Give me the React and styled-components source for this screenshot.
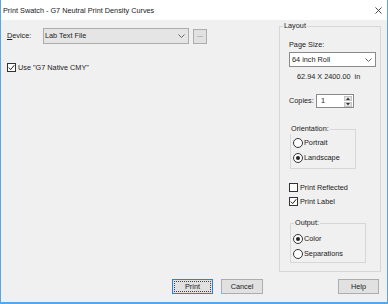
import React from 'react';
import styled, { createGlobalStyle } from 'styled-components';

const GlobalStyle = createGlobalStyle`
  html, body {
    margin: 0;
    padding: 0;
    background: #f0f0f0;
  }
  body {
    font-family: "Liberation Sans", Arial, sans-serif;
    font-size: 7.3px;
    color: #1b1b1b;
  }
  * { box-sizing: border-box; }
`;

const Window = styled.div`
  width: 388px;
  height: 304px;
  border: 1px solid #5aa5e6;
  border-top: none;
  border-bottom-width: 2px;
  display: flex;
  flex-direction: column;
  background: #f0f0f0;
`;

const TitleBar = styled.div`
  height: 20px;
  background: #fff;
  display: flex;
  align-items: center;
  justify-content: space-between;
  padding: 0 5px 0 2px;
  flex: none;
`;

const Body = styled.div`
  flex: 1;
  display: flex;
  flex-direction: column;
  padding: 1px 6px 0 6px;
`;

const Main = styled.div`
  display: flex;
  align-items: flex-start;
`;

const LeftColumn = styled.div`
  flex: 1;
  padding-top: 7px;
`;

const Row = styled.div`
  display: flex;
  align-items: center;
  height: ${p => p.$h || 12}px;
  margin-top: ${p => p.$mt || 0}px;
  line-height: ${p => p.$h || 12}px;
  white-space: nowrap;
`;

const FieldLabel = styled.span`
  width: ${p => p.$w}px;
  flex: none;
`;

const Combo = styled.div`
  width: ${p => p.$w}px;
  height: ${p => p.$h}px;
  background: ${p => (p.$white ? '#fff' : '#e5e5e5')};
  border: 1px solid ${p => (p.$white ? '#8a8a8a' : '#adadad')};
  display: flex;
  align-items: center;
  justify-content: space-between;
  padding: 0 3px 0 ${p => p.$pl || 1}px;
`;

const SmallButton = styled.div`
  width: 14px;
  height: 15px;
  margin-left: 4px;
  background: #e1e1e1;
  border: 1px solid #adadad;
  display: flex;
  align-items: center;
  justify-content: center;
  line-height: 8px;
  padding-bottom: 2px;
  color: #555;
`;

const Box = styled.span`
  width: 9px;
  height: 9px;
  border: 1px solid #333;
  background: #fff;
  display: inline-flex;
  align-items: center;
  justify-content: center;
  margin-right: 2px;
  flex: none;
`;

const Radio = styled.span`
  width: 10px;
  height: 10px;
  border: 1px solid #333;
  border-radius: 50%;
  background: #fff;
  display: inline-flex;
  align-items: center;
  justify-content: center;
  margin-right: 1px;
  flex: none;

  &::after {
    content: '';
    width: 4px;
    height: 4px;
    border-radius: 50%;
    background: ${p => (p.$on ? '#222' : 'transparent')};
  }
`;

const Group = styled.fieldset`
  margin: ${p => p.$mt || 0}px 0 0 ${p => p.$ml || 0}px;
  width: ${p => p.$w}px;
  min-width: 0;
  border: 1px solid #d7d7d7;
  padding: 0 0 ${p => p.$pb}px ${p => p.$pl}px;
  flex: none;
`;

const Legend = styled.legend`
  padding: 0 1px;
  margin-left: ${p => p.$ml}px;
  line-height: 10px;
  height: 10px;
`;

const SizeText = styled.div`
  margin-top: 5px;
  padding-left: 8px;
  line-height: 10px;
`;

const Spin = styled.div`
  width: 38px;
  height: 14px;
  background: #fff;
  border: 1px solid #8a8a8a;
  display: flex;
  align-items: stretch;
  justify-content: space-between;
  padding: 1px 1px 1px 4px;
  line-height: 10px;
`;

const SpinButtons = styled.div`
  width: 8px;
  display: flex;
  flex-direction: column;
  gap: 1px;
`;

const SpinHalf = styled.div`
  flex: 1;
  background: #e5e5e5;
  border: 1px solid #c4c4c4;
  display: flex;
  align-items: center;
  justify-content: center;
`;

const Footer = styled.div`
  display: flex;
  margin-top: 7px;
  padding-right: 2px;
`;

const Button = styled.div`
  width: ${p => p.$w}px;
  height: 15px;
  margin-left: ${p => p.$ml}px;
  background: #e1e1e1;
  border: 1px solid ${p => (p.$focus ? '#2f80d0' : '#adadad')};
  outline: ${p => (p.$focus ? '1px dotted #444' : 'none')};
  outline-offset: -3px;
  display: flex;
  align-items: center;
  justify-content: center;
`;

const U = styled.span`
  text-decoration: underline;
`;

const Chevron = () => (
  <svg width="7" height="4" viewBox="0 0 7 4">
    <polyline points="0.5,0.5 3.5,3.5 6.5,0.5" fill="none" stroke="#555" strokeWidth="0.9" />
  </svg>
);

const Check = () => (
  <svg width="7" height="7" viewBox="0 0 7 7">
    <polyline points="0.8,3.6 2.7,5.6 6.3,1.2" fill="none" stroke="#222" strokeWidth="1" />
  </svg>
);

const CheckBox = ({ checked, children, mt }) => (
  <Row $h={11} $mt={mt}>
    <Box>{checked && <Check />}</Box>
    {children}
  </Row>
);

const RadioRow = ({ on, children, mt }) => (
  <Row $h={12} $mt={mt}>
    <Radio $on={on} />
    {children}
  </Row>
);

const Arrow = ({ up }) => (
  <svg width="4" height="3" viewBox="0 0 4 3">
    <polygon points={up ? '0,3 2,0.5 4,3' : '0,0 2,2.5 4,0'} fill="#333" />
  </svg>
);

export default function App() {
  return (
    <>
      <GlobalStyle />
      <Window>
        <TitleBar>
          <span>Print Swatch - G7 Neutral Print Density Curves</span>
          <svg width="7" height="7" viewBox="0 0 7 7">
            <path d="M0.5 0.5 L6.5 6.5 M6.5 0.5 L0.5 6.5" stroke="#333" strokeWidth="0.9" />
          </svg>
        </TitleBar>
        <Body>
          <Main>
            <LeftColumn>
              <Row $h={16}>
                <FieldLabel $w={36}><U>D</U>evice:</FieldLabel>
                <Combo $w={146} $h={16} $pl={1}>
                  <span>Lab Text File</span>
                  <Chevron />
                </Combo>
                <SmallButton>...</SmallButton>
              </Row>
              <CheckBox checked mt={18}>Use "G7 Native CMY"</CheckBox>
            </LeftColumn>
            <Group $w={102} $pl={9} $pb={8}>
              <Legend $ml={-6}>Layout</Legend>
              <Row $h={10} $mt={9}>Page Size:</Row>
              <Row $h={15} $mt={2}>
                <Combo $w={87} $h={15} $white $pl={2}>
                  <span>64 inch Roll</span>
                  <Chevron />
                </Combo>
              </Row>
              <SizeText>62.94 X 2400.00&nbsp;&nbsp;in</SizeText>
              <Row $h={14} $mt={12}>
                <FieldLabel $w={27}>Copies:</FieldLabel>
                <Spin>
                  <span>1</span>
                  <SpinButtons>
                    <SpinHalf><Arrow up /></SpinHalf>
                    <SpinHalf><Arrow /></SpinHalf>
                  </SpinButtons>
                </Spin>
              </Row>
              <Group $w={66} $pl={2} $pb={4} $mt={16} $ml={1}>
                <Legend $ml={-3}>Orientation:</Legend>
                <RadioRow mt={3}>Portrait</RadioRow>
                <RadioRow on mt={3}>Landscape</RadioRow>
              </Group>
              <CheckBox mt={13}>Print Reflected</CheckBox>
              <CheckBox checked mt={3}>Print Label</CheckBox>
              <Group $w={76} $pl={2} $pb={2} $mt={11} $ml={1}>
                <Legend $ml={1}>Output:</Legend>
                <RadioRow on mt={5}>Color</RadioRow>
                <RadioRow mt={3}>Separations</RadioRow>
              </Group>
            </Group>
          </Main>
          <Footer>
            <Button $w={41} $ml={165} $focus>Print</Button>
            <Button $w={42} $ml={8}>Cancel</Button>
            <Button $w={41} $ml={75}>Help</Button>
          </Footer>
        </Body>
      </Window>
    </>
  );
}
